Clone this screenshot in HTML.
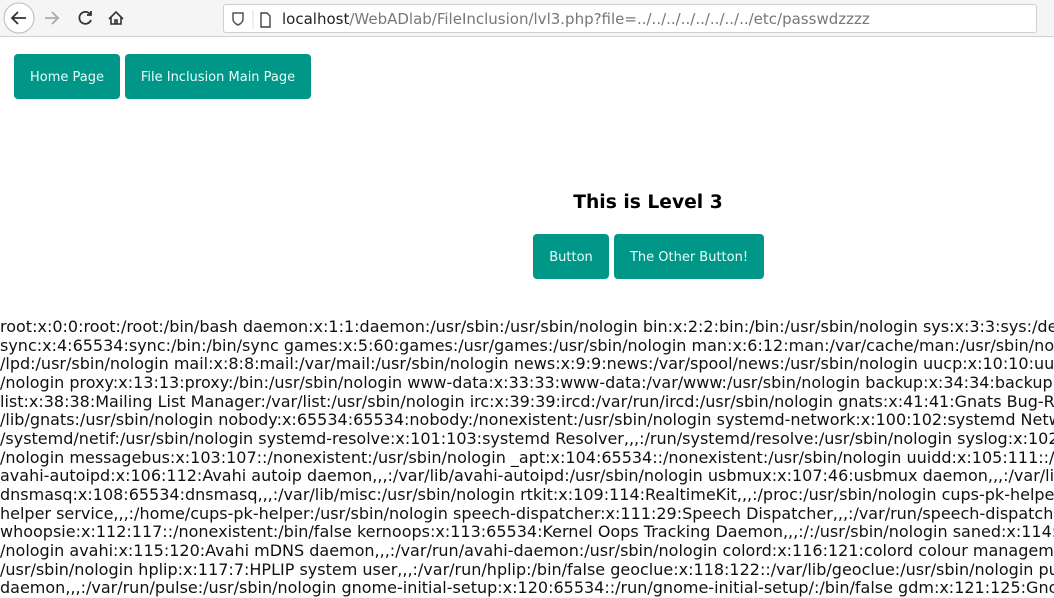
<!DOCTYPE html>
<html><head><meta charset="utf-8"><style>
*{margin:0;padding:0;box-sizing:border-box}
body{width:1054px;height:592px;overflow:hidden;background:#fff;font-family:"DejaVu Sans","Liberation Sans",sans-serif;position:relative}
.bar{position:absolute;left:0;top:0;width:1054px;height:37px;background:#f5f5f5;border-bottom:1px solid #d0d0d0}
.url{position:absolute;left:223px;top:4px;width:814px;height:29px;background:#fff;border:1px solid #cfcfcf;border-radius:3px}
.url span{position:absolute;left:58px;top:5px;font-size:15px;color:#777;white-space:nowrap}
.url b{font-weight:normal;color:#222}
.btn{position:absolute;background:#009688;color:#e8fff8;font-size:13px;border-radius:4px;display:flex;align-items:center;justify-content:center;white-space:nowrap;padding-top:2px}
h3{position:absolute;left:540px;width:216px;top:192px;text-align:center;font-size:18.7px;font-weight:bold;color:#000}
.pre{position:absolute;left:0;top:318px;font-size:16px;line-height:18.65px;color:#111;white-space:nowrap}
svg{position:absolute}
</style></head><body>
<div class="bar">
<svg width="1054" height="37" viewBox="0 0 1054 37">
<circle cx="19" cy="18" r="15" fill="#fff" stroke="#bbb"/>
<path d="M26 18H12M18 12l-6 6 6 6" fill="none" stroke="#333" stroke-width="1.8"/>
<path d="M59 18H45M52 12l6 6-6 6" fill="none" stroke="#aaa" stroke-width="1.8"/>
<path d="M90 14a6 6 0 1 0 1 6M91 11v4h-4" fill="none" stroke="#333" stroke-width="1.8"/>
<path d="M109 19l7-7 7 7M111 17v7h10v-7M115 24v-4h2v4" fill="none" stroke="#333" stroke-width="1.6"/>
<path d="M958 18h1M964 18h1M970 18h1" stroke="#555" stroke-width="2.5"/>
<path d="M985 12h12v5a6 6 0 0 1-12 0z M988 16l3 3 3-3" fill="none" stroke="#444" stroke-width="1.5"/>
<path d="M1020 10l2.4 5 5.4.6-4 3.7 1.1 5.3-4.9-2.8-4.9 2.8 1.1-5.3-4-3.7 5.4-.6z" fill="none" stroke="#444" stroke-width="1.5"/>
</svg>
<div class="url"><svg width="60" height="29"><path d="M9 8h10v6c0 4-5 6-5 6s-5-2-5-6z" fill="none" stroke="#555" stroke-width="1.5"/><path d="M29 5v19" stroke="#ddd"/><path d="M37 8h6l3 3v11h-9z" fill="none" stroke="#444" stroke-width="1.4"/></svg><span><b>localhost</b>/WebADlab/FileInclusion/lvl3.php?file=../../../../../../../../etc/passwdzzzz</span></div>
</div>
<div class="btn" style="left:14px;top:54px;width:106px;height:45px">Home Page</div>
<div class="btn" style="left:125px;top:54px;width:186px;height:45px">File Inclusion Main Page</div>
<h3>This is Level 3</h3>
<div class="btn" style="left:533px;top:234px;width:76px;height:45px">Button</div>
<div class="btn" style="left:614px;top:234px;width:150px;height:45px">The Other Button!</div>
<div class="pre">
root:x:0:0:root:/root:/bin/bash daemon:x:1:1:daemon:/usr/sbin:/usr/sbin/nologin bin:x:2:2:bin:/bin:/usr/sbin/nologin sys:x:3:3:sys:/dev<br>
sync:x:4:65534:sync:/bin:/bin/sync games:x:5:60:games:/usr/games:/usr/sbin/nologin man:x:6:12:man:/var/cache/man:/usr/sbin/nologin<br>
/lpd:/usr/sbin/nologin mail:x:8:8:mail:/var/mail:/usr/sbin/nologin news:x:9:9:news:/var/spool/news:/usr/sbin/nologin uucp:x:10:10:uucp<br>
/nologin proxy:x:13:13:proxy:/bin:/usr/sbin/nologin www-data:x:33:33:www-data:/var/www:/usr/sbin/nologin backup:x:34:34:backup:<br>
list:x:38:38:Mailing List Manager:/var/list:/usr/sbin/nologin irc:x:39:39:ircd:/var/run/ircd:/usr/sbin/nologin gnats:x:41:41:Gnats Bug-Re<br>
/lib/gnats:/usr/sbin/nologin nobody:x:65534:65534:nobody:/nonexistent:/usr/sbin/nologin systemd-network:x:100:102:systemd Netw<br>
/systemd/netif:/usr/sbin/nologin systemd-resolve:x:101:103:systemd Resolver,,,:/run/systemd/resolve:/usr/sbin/nologin syslog:x:102<br>
/nologin messagebus:x:103:107::/nonexistent:/usr/sbin/nologin _apt:x:104:65534::/nonexistent:/usr/sbin/nologin uuidd:x:105:111::/<br>
avahi-autoipd:x:106:112:Avahi autoip daemon,,,:/var/lib/avahi-autoipd:/usr/sbin/nologin usbmux:x:107:46:usbmux daemon,,,:/var/lib<br>
dnsmasq:x:108:65534:dnsmasq,,,:/var/lib/misc:/usr/sbin/nologin rtkit:x:109:114:RealtimeKit,,,:/proc:/usr/sbin/nologin cups-pk-helper<br>
helper service,,,:/home/cups-pk-helper:/usr/sbin/nologin speech-dispatcher:x:111:29:Speech Dispatcher,,,:/var/run/speech-dispatcher<br>
whoopsie:x:112:117::/nonexistent:/bin/false kernoops:x:113:65534:Kernel Oops Tracking Daemon,,,:/:/usr/sbin/nologin saned:x:114:<br>
/nologin avahi:x:115:120:Avahi mDNS daemon,,,:/var/run/avahi-daemon:/usr/sbin/nologin colord:x:116:121:colord colour management<br>
/usr/sbin/nologin hplip:x:117:7:HPLIP system user,,,:/var/run/hplip:/bin/false geoclue:x:118:122::/var/lib/geoclue:/usr/sbin/nologin pul<br>
daemon,,,:/var/run/pulse:/usr/sbin/nologin gnome-initial-setup:x:120:65534::/run/gnome-initial-setup/:/bin/false gdm:x:121:125:Gnome
</div>
</body></html>
